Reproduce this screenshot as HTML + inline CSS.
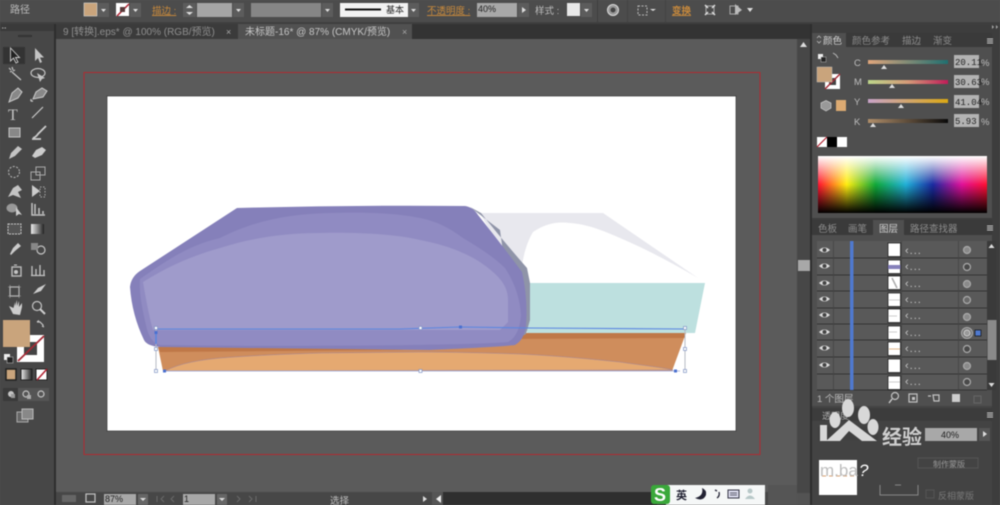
<!DOCTYPE html>
<html lang="zh">
<head>
<meta charset="utf-8">
<title>路径</title>
<style>
html,body{margin:0;padding:0;background:#535353;width:1000px;height:505px;overflow:hidden}
svg{display:block;position:absolute;left:0;top:0;filter:blur(.5px)}
text{font-family:"Liberation Sans","Noto Sans CJK SC",sans-serif}
.t{font-size:9.5px;fill:#bdbdbd}
.o{font-size:9.5px;fill:#c98a3c;text-decoration:underline}
.k{font-size:9px;fill:#222}
.i{fill:none;stroke:#c4c4c4;stroke-width:1.2}
.f{fill:#c4c4c4}
</style>
</head>
<body>
<svg width="1000" height="505" viewBox="0 0 1000 505" xmlns="http://www.w3.org/2000/svg">
<defs>
<linearGradient id="cs" x1="0" x2="1"><stop offset="0" stop-color="#e0a67c"/><stop offset="1" stop-color="#1f6f70"/></linearGradient>
<linearGradient id="ms" x1="0" x2="1"><stop offset="0" stop-color="#bcd58a"/><stop offset=".5" stop-color="#d49a78"/><stop offset="1" stop-color="#c01c58"/></linearGradient>
<linearGradient id="ys" x1="0" x2="1"><stop offset="0" stop-color="#c8a3c8"/><stop offset="1" stop-color="#dba813"/></linearGradient>
<linearGradient id="ks" x1="0" x2="1"><stop offset="0" stop-color="#b08e6a"/><stop offset="1" stop-color="#0a0a0a"/></linearGradient>
<linearGradient id="hue" x1="0" x2="1">
<stop offset="0" stop-color="#ff1030"/><stop offset=".17" stop-color="#ffee10"/><stop offset=".34" stop-color="#10a838"/><stop offset=".52" stop-color="#20b0d8"/><stop offset=".68" stop-color="#1a2aa0"/><stop offset=".85" stop-color="#e0109a"/><stop offset="1" stop-color="#ff1030"/>
</linearGradient>
<linearGradient id="wh" x1="0" x2="0" y1="0" y2="1"><stop offset="0" stop-color="#fff"/><stop offset=".5" stop-color="#fff" stop-opacity="0"/></linearGradient>
<linearGradient id="bk" x1="0" x2="0" y1="0" y2="1"><stop offset=".5" stop-color="#000" stop-opacity="0"/><stop offset="1" stop-color="#000"/></linearGradient>
<linearGradient id="gr" x1="0" x2="1"><stop offset="0" stop-color="#eee"/><stop offset="1" stop-color="#222"/></linearGradient>
<g id="eye"><path d="M-5.5 0Q0 -5 5.500 0Q0 5 -5.500 0Z" fill="#ddd"/><circle r="2" fill="#444"/></g>
<g id="dd"><rect x="0" y="0" width="11" height="14" fill="#5c5c5c"/><path d="M3 6h5l-2.500 3z" fill="#e0e0e0"/></g>
</defs>

<rect width="1000" height="505" fill="#535353"/>
<!-- canvas -->
<rect x="56" y="39" width="741" height="454" fill="#5b5b5b"/>
<rect x="84" y="72.500" width="676" height="382" fill="none" stroke="#b02a30" stroke-width="1"/>
<rect x="107" y="96" width="629" height="335" fill="#fff" stroke="#222" stroke-width=".6"/>

<!-- art -->
<path d="M480 213H603L698 278C672 263 648 250 620 238C600 229 585 224 570 223C555 221 543 225 533 232C525 245 521 265 520 284Z" fill="#e8e8ee"/>
<path d="M527 283H705L695 333H527Z" fill="#bde0df"/>
<path d="M158 347L527 333H686L672 371H163Z" fill="#cf8d5c"/>
<path d="M158 347L527 333H686L684 338L510 339L400 350L160 352Z" fill="#bf7848"/>
<path d="M165 371C180 363 200 360 220 358C260 355 290 354 320 353L420 352C450 352 490 353 520 354C560 356 590 359 620 362C640 365 660 367 673 370Z" fill="#e5a971" stroke="#a0859a" stroke-width=".5"/>
<path d="M470 207L481 213Q505 243 527 268L530 283L530 320L526 334L515 340L500 230Z" fill="#8f94a8"/>
<path d="M237 208Q350 205 465 206Q473 207 478 215Q502 245 522 272Q528 298 526 326Q524 340 515 345Q500 347 430 350L160 347Q147 346 144 340Q132 315 130 287Q131 277 140 271Z" fill="#8580ba"/>
<path d="M140 279C170 258 190 245 220 238C255 220 290 214 330 213C365 212 395 213 420 218C440 222 452 230 463 238C480 248 495 258 505 268C516 285 520 300 521 315C520 328 516 338 508 342C480 345 300 347 160 345C152 343 148 335 146 325C142 308 139 293 140 279Z" fill="#908bc2"/>
<path d="M143 282C170 265 195 255 220 248C250 238 285 233 320 233C355 232 395 234 420 240C440 244 452 248 463 253C475 258 485 265 493 272C502 280 508 288 508 300V322L500 330H153C150 320 146 300 143 282Z" fill="#9f9bcb"/>

<!-- selection -->
<path d="M156 328V371M685 328L685 371" fill="none" stroke="#b7bac4" stroke-width="1"/>
<path d="M163 371H680" stroke="#9aa6d8" stroke-width=".8" fill="none"/>
<path d="M155 329H400L460 327L530 328L685 329" stroke="#5b86e0" stroke-width="1.100" fill="none"/>
<path d="M156 331V344" stroke="#5b86e0" stroke-width="1.500" fill="none"/>
<g fill="#fff" stroke="#7f93c4" stroke-width=".7">
<rect x="154.500" y="326.500" width="3" height="3"/><rect x="419" y="326.500" width="3" height="3"/><rect x="683.500" y="326.500" width="3" height="3"/>
<rect x="154.500" y="347.500" width="3" height="3"/><rect x="683.500" y="347.500" width="3" height="3"/>
<rect x="154.500" y="369.500" width="3" height="3"/><rect x="419" y="369.500" width="3" height="3"/><rect x="683.500" y="369.500" width="3" height="3"/>
</g>
<g fill="#4a70d0"><rect x="163" y="369.500" width="3" height="3"/><rect x="459" y="325.500" width="3" height="3"/><rect x="674" y="369.500" width="3" height="3"/><rect x="154.500" y="331" width="3" height="3"/></g>

<!-- top bar -->
<rect width="1000" height="23" fill="#4c4c4c"/>
<rect y="22" width="1000" height="2" fill="#3f3f3f"/>
<text x="10" y="13" font-size="10" fill="#bdbdbd">路径</text>
<rect x="84" y="3" width="13" height="13" fill="#c9a47c" stroke="#ddd" stroke-width=".6"/>
<use href="#dd" x="98" y="3"/>
<rect x="116" y="3" width="13" height="13" fill="#fff"/>
<path d="M117 16L129 4" stroke="#b02030" stroke-width="1.500"/>
<rect x="120" y="7" width="5" height="5" fill="#5a3a3a"/>
<use href="#dd" x="130" y="3"/>
<text x="152" y="14" class="o">描边 :</text>
<rect x="183" y="3" width="13" height="14" fill="#5c5c5c"/>
<path d="M186 8h7l-3.500-3zM186 12h7l-3.500 3z" fill="#ddd"/>
<rect x="197" y="3" width="35" height="14" fill="#a5a5a5"/>
<use href="#dd" x="233" y="3"/>
<rect x="251" y="3" width="70" height="14" fill="#868686"/>
<use href="#dd" x="322" y="3"/>
<rect x="340" y="3" width="68" height="14" fill="#f2f2f2"/>
<rect x="345" y="8.500" width="36" height="2" fill="#111"/>
<text x="386" y="13" class="k">基本</text>
<use href="#dd" x="408" y="3"/>
<text x="427" y="14" class="o">不透明度 :</text>
<rect x="477" y="3" width="40" height="14" fill="#a8a8a8"/>
<text x="478" y="12" class="k">40%</text>
<rect x="518" y="3" width="11" height="14" fill="#5c5c5c"/><path d="M522 7l4 3-4 3z" fill="#ddd"/>
<text x="535" y="14" class="t">样式 :</text>
<rect x="567" y="3" width="13" height="13" fill="#e8e8e8"/>
<use href="#dd" x="581" y="3"/>
<path d="M597.500 0V22" stroke="#3f3f3f"/>
<circle cx="613" cy="10" r="5.500" fill="#999" stroke="#ddd"/><circle cx="613" cy="10" r="2.500" fill="#444"/>
<path d="M627.500 0V22" stroke="#444"/>
<rect x="638" y="6" width="9" height="9" fill="none" stroke="#bbb" stroke-dasharray="2 1.500"/>
<path d="M650 9h6l-3 2z" fill="#ddd"/>
<path d="M665.500 0V22" stroke="#444"/>
<text x="672" y="14" class="o" style="font-weight:bold">变换</text>
<path d="M706 6H714V14H706Z" fill="none" stroke="#aaa"/>
<path d="M705 5l3 3M715 5l-3 3M705 15l3-3M715 15l-3-3" stroke="#ddd" stroke-width="1.500"/>
<rect x="730" y="6" width="8" height="8" fill="none" stroke="#aaa"/>
<path d="M735 4L742 10L735 15Z" fill="#bbb"/>
<path d="M747 8h6l-3 4z" fill="#ddd"/>

<!-- tabs -->
<rect x="0" y="24" width="1000" height="15" fill="#333"/>
<rect x="56" y="24" width="182" height="15" fill="#3b3b3b"/>
<text x="63" y="35" font-size="10" fill="#8f8f8f">9 [转换].eps* @ 100% (RGB/预览)</text>
<text x="226" y="35" font-size="9" fill="#aaa">×</text>
<rect x="238" y="24" width="174" height="15" fill="#515151"/>
<text x="245" y="35" font-size="10" fill="#c6c6c6">未标题-16* @ 87% (CMYK/预览)</text>
<text x="402" y="35" font-size="9" fill="#aaa">×</text>

<!-- left toolbar -->
<rect x="0" y="24" width="54" height="481" fill="#474747"/>
<rect x="54" y="24" width="2" height="481" fill="#2e2e2e"/>
<rect x="0" y="24" width="54" height="7" fill="#3a3a3a"/>
<path d="M2 28h5" stroke="#aaa" stroke-dasharray="1.500 1"/>
<path d="M18 36h14" stroke="#333" stroke-width="2"/>
<rect x="3" y="47" width="22" height="17" fill="#333"/>
<path d="M10.500 48V61L13.500 58L16 63L18 62L15.500 57.500H19.500Z" fill="#222" stroke="#ccc" stroke-width=".9"/>
<path d="M35 48V61L38 58L40 63L42 62L40 57.500H44Z" fill="#c4c4c4"/>
<path d="M9 68l2 2M12 67l1 3M15 70l-2 1M10 72l2-1M12 72L21 80" class="i" stroke-width="1.600"/>
<ellipse cx="38" cy="73" rx="7" ry="4.500" class="i" stroke-width="1.500"/><path d="M37 73l3 9 2-3 3-1z" class="f"/>
<path d="M9 102L12 93L18 88L22 92L18 98Z" fill="#888" stroke="#ccc"/>
<path d="M31 99Q30 102 33 101M33 99L36 92L42 88L47 91L43 97Z" fill="#888" stroke="#ccc"/>
<text x="8" y="120" font-size="16" fill="#c4c4c4" style="font-family:'Liberation Serif'">T</text>
<path d="M32 118L43 107" stroke="#c8c8c8" stroke-width="1.200"/>
<rect x="9" y="128" width="11" height="9" fill="#888" stroke="#c4c4c4"/>
<path d="M33 138Q36 137 38 134L46 126M32 139H41" stroke="#ccc" stroke-width="1.800" fill="none"/>
<path d="M9 159L11 153L18 146L22 149L15 156Z" fill="#c4c4c4"/>
<path d="M32 156L36 150L42 147L46 150L42 155L35 158Z" fill="#ccc"/>
<circle cx="14" cy="172" r="5.500" fill="none" stroke="#bbb" stroke-dasharray="2 1.500"/>
<path d="M31 172h9v8h-9zM36 167h9v8h-9z" fill="none" stroke="#aaa"/>
<path d="M8 197L13 188L18 185L22 190L18 192L21 198L13 195Z" fill="#c4c4c4"/>
<path d="M32 185V197L40 191Z" fill="#ccc"/><path d="M40 187h5v10h-5z" fill="none" stroke="#aaa" stroke-dasharray="1.500 1.500"/>
<ellipse cx="12" cy="208" rx="5.500" ry="4.500" fill="#999"/><path d="M16 207v9l3-2 3 1z" fill="#ccc"/>
<path d="M32 203v12h13M35 204v10M39 208v6M43 211v3" stroke="#c4c4c4" stroke-width="1.500" fill="none"/>
<rect x="8" y="224" width="13" height="10" fill="#555" stroke="#ccc" stroke-dasharray="2 1"/>
<rect x="31" y="224" width="13" height="10" fill="url(#gr)"/>
<path d="M10 254L13 248L18 243L21 246L15 251L11 255Z" fill="#ccc"/>
<circle cx="41" cy="250" r="4" class="i"/><rect x="31" y="243" width="7" height="7" fill="#888"/>
<rect x="12" y="267" width="9" height="9" fill="none" stroke="#bbb" stroke-width="1.400"/><circle cx="16" cy="272" r="2" class="f"/><path d="M14 265h3" stroke="#ccc"/>
<path d="M32 275V266M36 275V269M40 275V265M44 275V270M31 275.500h14" stroke="#c4c4c4" stroke-width="1.300" fill="none"/>
<rect x="10" y="287" width="9" height="9" class="i"/><path d="M8 287h13M8 296h13M10 285v13M19 285v13" stroke="#aaa" stroke-width=".6"/>
<path d="M33 294L38 288L46 284L41 291Z" fill="#ccc"/>
<path d="M9 306L13 314L20 315L22 307V303L19 307V301L17 306V300L15 306V302L13.500 308Z" fill="#ccc"/>
<circle cx="37" cy="306" r="4.500" class="i" stroke-width="1.500"/><path d="M40 309L45 314" stroke="#ccc" stroke-width="2"/>

<!-- fill/stroke -->
<rect x="17" y="335" width="27" height="27" fill="#fff"/>
<rect x="24" y="342" width="13" height="13" fill="#444"/>
<path d="M18 361L44 336" stroke="#a52a35" stroke-width="1.800"/>
<rect x="3" y="320" width="27" height="27" fill="#c9a47c"/>
<path d="M37 322h3l3 3v2M44 327l-2-1M37 322l2-1.500" class="i"/>
<rect x="4" y="354" width="6" height="6" fill="#eee"/><rect x="7" y="357" width="6" height="6" fill="#222" stroke="#ccc" stroke-width=".5"/>
<rect x="6" y="369" width="10" height="11" fill="#c9a47c" stroke="#222" stroke-width="1.500"/>
<rect x="21" y="369" width="11" height="11" fill="url(#gr)" stroke="#222"/>
<rect x="36" y="369" width="11" height="11" fill="#fff" stroke="#222"/>
<path d="M37 380L47 369" stroke="#b02030" stroke-width="1.500"/>
<rect x="3" y="388" width="46" height="13" fill="#555"/><rect x="3" y="388" width="15" height="13" fill="#3a3a3a"/>
<circle cx="11" cy="394" r="3" class="f"/><rect x="11" y="394" width="4" height="4" fill="#999"/>
<circle cx="26" cy="394" r="3" class="i"/><rect x="27" y="395" width="4" height="4" fill="#aaa"/>
<circle cx="41" cy="394" r="3" class="i"/>
<rect x="17" y="412" width="11" height="10" fill="#666" stroke="#aaa"/><rect x="22" y="409" width="11" height="10" fill="#888" stroke="#bbb"/>

<!-- right scroll -->
<rect x="797" y="39" width="13" height="454" fill="#474747"/>
<path d="M800 47h7l-3.500-5z" fill="#ddd"/>
<rect x="798" y="260" width="12" height="11" fill="#a8a8a8"/>
<rect x="810" y="24" width="2" height="481" fill="#2e2e2e"/>
<rect x="812" y="24" width="188" height="481" fill="#3d3d3d"/>
<path d="M992 25l2 2-2 2zM996 25l2 2-2 2z" fill="#aaa"/>

<!-- color panel -->
<rect x="812" y="47" width="180" height="171" fill="#4f4f4f"/>
<rect x="812" y="33" width="180" height="14" fill="#3a3a3a"/>
<rect x="812" y="33" width="34" height="14" fill="#4f4f4f"/>
<text x="823" y="44" font-size="9.500" fill="#d2d2d2">颜色</text>
<text x="852" y="44" font-size="9.500" fill="#8d8d8d">颜色参考</text>
<text x="902" y="44" font-size="9.500" fill="#8d8d8d">描边</text>
<text x="933" y="44" font-size="9.500" fill="#8d8d8d">渐变</text>
<path d="M817 38l2-2 2 2M817 41l2 2 2-2" stroke="#bbb" fill="none" stroke-width=".8"/>
<path d="M987 39h6M987 41h6M987 43h6" stroke="#ccc"/>
<rect x="818" y="54" width="5" height="5" fill="#eee"/><rect x="821" y="57" width="5" height="5" fill="#222" stroke="#bbb" stroke-width=".5"/>
<path d="M833 53l3 2 2 3" stroke="#bbb" fill="none"/>
<rect x="825" y="74" width="15" height="15" fill="#fff"/><rect x="829" y="78" width="7" height="7" fill="#444"/>
<path d="M825 89L840 74" stroke="#a52a35" stroke-width="1.400"/>
<rect x="817" y="67" width="15" height="15" fill="#c9a47c" stroke="#ccc" stroke-width=".4"/>
<path d="M821 103L826 100.500L831 103V108L826 111L821 108Z" fill="#999" stroke="#ccc" stroke-width=".7"/>
<rect x="836" y="100" width="10" height="11" fill="#dcaa72"/>

<text x="854" y="66" class="t">C</text>
<rect x="868" y="60" width="80" height="4" fill="url(#cs)"/>
<path d="M881 69l3-4 3 4z" fill="#ddd"/>
<rect x="954" y="55" width="25" height="13" fill="#b3b3b3"/>
<text x="955" y="65" class="k" style="font-family:'Liberation Mono'">20.11</text>
<text x="981" y="66" class="t">%</text>

<text x="854" y="85" class="t">M</text>
<rect x="868" y="80" width="80" height="4" fill="url(#ms)"/>
<path d="M889 88l3-4 3 4z" fill="#ddd"/>
<rect x="954" y="75" width="25" height="13" fill="#b3b3b3"/>
<text x="955" y="85" class="k" style="font-family:'Liberation Mono'">30.63</text>
<text x="981" y="85" class="t">%</text>

<text x="854" y="105" class="t">Y</text>
<rect x="868" y="99" width="80" height="4" fill="url(#ys)"/>
<path d="M898 108l3-4 3 4z" fill="#ddd"/>
<rect x="954" y="95" width="25" height="13" fill="#b3b3b3"/>
<text x="955" y="105" class="k" style="font-family:'Liberation Mono'">41.04</text>
<text x="981" y="105" class="t">%</text>

<text x="854" y="125" class="t">K</text>
<rect x="868" y="119" width="80" height="4" fill="url(#ks)"/>
<path d="M870 127l3-4 3 4z" fill="#ddd"/>
<rect x="954" y="114" width="25" height="13" fill="#b3b3b3"/>
<text x="955" y="124" class="k" style="font-family:'Liberation Mono'">5.93</text>
<text x="981" y="125" class="t">%</text>

<rect x="817" y="137" width="10" height="10" fill="#fff"/><path d="M817 147L827 137" stroke="#b02030" stroke-width="1.200"/>
<rect x="827" y="137" width="10" height="10" fill="#000"/>
<rect x="837" y="137" width="10" height="10" fill="#fff"/>
<rect x="818" y="156" width="169" height="57" fill="url(#hue)"/>
<rect x="818" y="156" width="169" height="57" fill="url(#wh)"/>
<rect x="818" y="156" width="169" height="57" fill="url(#bk)"/>

<!-- layers panel -->
<rect x="812" y="220" width="180" height="186" fill="#4f4f4f"/>
<rect x="812" y="220" width="180" height="15" fill="#3a3a3a"/>
<rect x="873" y="220" width="31" height="15" fill="#4f4f4f"/>
<text x="818" y="232" font-size="9.500" fill="#8d8d8d">色板</text>
<text x="848" y="232" font-size="9.500" fill="#8d8d8d">画笔</text>
<text x="879" y="232" font-size="9.500" fill="#d2d2d2">图层</text>
<text x="910" y="232" font-size="9.500" fill="#8d8d8d">路径查找器</text>
<path d="M987 226h6M987 228h6M987 230h6" stroke="#ccc"/>
<rect x="817" y="241" width="170" height="149" fill="#595959"/>
<path d="M817 258h170M817 275h170M817 291h170M817 308h170M817 324h170M817 340h170M817 357h170M817 374h170M817 390h170" stroke="#333" stroke-width=".9"/>
<path d="M833.500 241V390M958.500 241V390M901.500 241V390" stroke="#444" stroke-width=".8"/>
<rect x="850" y="241" width="3.500" height="149" fill="#4f79cf"/>
<use href="#eye" x="824.500" y="250"/><use href="#eye" x="824.500" y="266"/><use href="#eye" x="824.500" y="283"/><use href="#eye" x="824.500" y="299"/><use href="#eye" x="824.500" y="315"/><use href="#eye" x="824.500" y="332"/><use href="#eye" x="824.500" y="348"/><use href="#eye" x="824.500" y="365"/>
<g fill="#fff" stroke="#111" stroke-width=".7">
<rect x="888" y="243" width="12.500" height="13.500"/><rect x="888" y="260" width="12.500" height="13.500"/><rect x="888" y="276" width="12.500" height="13.500"/><rect x="888" y="293" width="12.500" height="13.500"/><rect x="888" y="309" width="12.500" height="13.500"/><rect x="888" y="326" width="12.500" height="13.500"/><rect x="888" y="342" width="12.500" height="13.500"/><rect x="888" y="359" width="12.500" height="13.500"/><rect x="888" y="376" width="12.500" height="13.500"/>
</g>
<rect x="888" y="265" width="12.500" height="4" fill="#8580ba"/>
<path d="M892 278L897 288" stroke="#aaa" stroke-width="1.500"/>
<path d="M889 300h11M889 316h8M889 332h8M889 382h11" stroke="#ccc"/>
<path d="M889 349h11" stroke="#e0b88a"/>
<g font-size="11" fill="#c8c8c8" letter-spacing="1">
<text x="905" y="254">‹...</text><text x="905" y="270">‹...</text><text x="905" y="287">‹...</text><text x="905" y="303">‹...</text><text x="905" y="319">‹...</text><text x="905" y="336">‹...</text><text x="905" y="352">‹...</text><text x="905" y="369">‹...</text><text x="905" y="385">‹...</text>
</g>
<g stroke="#aaa" stroke-width="1.200" fill="#8a8a8a">
<circle cx="967" cy="250" r="3.500"/><circle cx="967" cy="267" r="3.500" fill="#4a4a4a"/><circle cx="967" cy="284" r="3.500"/><circle cx="967" cy="300" r="3.500" fill="#6a6a6a"/><circle cx="967" cy="317" r="3.500"/><circle cx="967" cy="349" r="3.500" fill="#4a4a4a"/><circle cx="967" cy="366" r="3.500"/><circle cx="967" cy="382" r="3.500" fill="#4a4a4a"/>
</g>
<circle cx="967" cy="333" r="5.500" fill="#777" stroke="#aaa"/><circle cx="967" cy="333" r="3" fill="#999" stroke="#ddd" stroke-width=".8"/>
<rect x="975" y="330" width="6" height="6" fill="#4f79cf" stroke="#111" stroke-width=".7"/>
<rect x="987" y="241" width="9" height="149" fill="#3a3a3a"/>
<rect x="987.500" y="320" width="9" height="40" fill="#8a8a8a"/>
<path d="M988.500 248h6l-3-4zM988.500 383h6l-3 4z" fill="#ddd"/>
<text x="817" y="402" font-size="9.500" fill="#bdbdbd">1 个图层</text>
<circle cx="895" cy="396" r="3.500" class="i"/><path d="M892 399l-3 4" stroke="#ccc" stroke-width="1.400"/>
<rect x="909" y="394" width="8" height="8" class="i"/><rect x="912" y="397" width="3" height="3" class="f"/>
<path d="M928 396h3M933 395h6v6h-5z" class="i"/><rect x="952" y="394" width="8" height="8" fill="#ccc"/>
<rect x="974" y="396" width="7" height="7" fill="none" stroke="#666"/>

<!-- transparency panel -->
<rect x="812" y="406" width="180" height="99" fill="#434343"/>
<rect x="812" y="408" width="180" height="13" fill="#3c3c3c"/>
<text x="822" y="419" font-size="9" fill="#aaa">透明度</text>
<path d="M987 413h6M987 415h6M987 417h6" stroke="#ccc"/>
<rect x="818" y="427" width="60" height="13" fill="#3f3f3f"/>
<rect x="925" y="428" width="52" height="13" fill="#a8a8a8"/>
<text x="941" y="438" class="k">40%</text>
<rect x="979" y="428" width="11" height="13" fill="#555"/><path d="M983 431l4 3-4 3z" fill="#ddd"/>
<rect x="819" y="460" width="38" height="35" fill="#fff"/>
<path d="M822 476h33" stroke="#d9a070" stroke-dasharray="4 3"/>
<path d="M880 485V495H918V485M895 485h6" fill="none" stroke="#888"/>
<path d="M918 458h60v10h-60z" fill="none" stroke="#555"/>
<text x="933" y="467" font-size="8" fill="#999">制作蒙版</text>
<rect x="926" y="490" width="8" height="8" fill="none" stroke="#555"/>
<text x="938" y="499" font-size="9" fill="#777">反相蒙版</text>

<!-- watermark -->
<g fill="#d8d8d8">
<ellipse cx="848" cy="408" rx="6" ry="9"/><ellipse cx="864" cy="415" rx="6" ry="9"/><ellipse cx="835" cy="420" rx="5.500" ry="8"/><ellipse cx="873" cy="427" rx="5.500" ry="8"/>
<path d="M826 441L849 420L877 441H862L849 431L840 441Z"/>
<rect x="820" y="425" width="7" height="16"/>
</g>
<text x="882" y="444" font-size="20" font-weight="bold" fill="#cfcfcf">经验</text>
<text x="820" y="476" font-size="17" fill="#bdbdbd" style="font-family:'Liberation Sans'">m.ba</text>
<text x="859" y="476" font-size="17" font-style="italic" fill="#fff">?</text>

<!-- status bar -->
<rect x="56" y="492" width="741" height="13" fill="#474747"/>
<rect x="62" y="495" width="14" height="7" fill="#666"/>
<rect x="86" y="494" width="9" height="8" class="i"/>
<rect x="104" y="494" width="32" height="11" fill="#a8a8a8"/>
<text x="105" y="502" class="k">87%</text>
<rect x="138" y="494" width="10" height="11" fill="#666"/><path d="M140 498h6l-3 3z" fill="#ddd"/>
<path d="M157 496v6M164 496l-3 3 3 3M174 496l-3 3 3 3" stroke="#6a6a6a" fill="none"/>
<rect x="183" y="494" width="32" height="11" fill="#a8a8a8"/>
<text x="184" y="502" class="k">1</text>
<rect x="217" y="494" width="10" height="11" fill="#666"/><path d="M219 498h6l-3 3z" fill="#ddd"/>
<path d="M237 496l3 3-3 3M249 496l3 3-3 3M256 496v6" stroke="#6a6a6a" fill="none"/>
<text x="330" y="504" font-size="9.500" fill="#c0c0c0">选择</text>
<path d="M423 496l4 3-4 3z" fill="#ddd"/>
<rect x="432" y="492" width="225" height="13" fill="#2f2f2f"/>
<rect x="432" y="492" width="11" height="13" fill="#555"/>
<path d="M441 495l-5 4 5 4z" fill="#eee"/>

<!-- IME bar -->
<rect x="666" y="485" width="99" height="20" fill="#f5f7f7"/>
<rect x="651" y="485" width="19" height="19" rx="3" fill="#3aa83a"/>
<text x="654" y="501" font-size="18" font-weight="bold" fill="#fff" style="font-family:'Liberation Sans'">S</text>
<text x="676" y="499" font-size="11" font-weight="bold" fill="#223">英</text>
<path d="M702 488Q704 496 695 498Q703 502 706 495Q707 490 702 488Z" fill="#223"/>
<path d="M715 490l2 1M719 492Q720 496 717 498" stroke="#223" stroke-width="1.300" fill="none"/>
<rect x="728" y="490" width="11" height="8" fill="#dde" stroke="#334" stroke-width="1"/>
<path d="M730 493h7M730 495h7" stroke="#334" stroke-width=".7"/>
<circle cx="750" cy="491" r="2.500" fill="#b8c8c8"/><path d="M745 499Q750 492 755 499Z" fill="#b8c8c8"/>
<rect x="768" y="485" width="29" height="20" fill="#555"/>
</svg>
</body>
</html>
